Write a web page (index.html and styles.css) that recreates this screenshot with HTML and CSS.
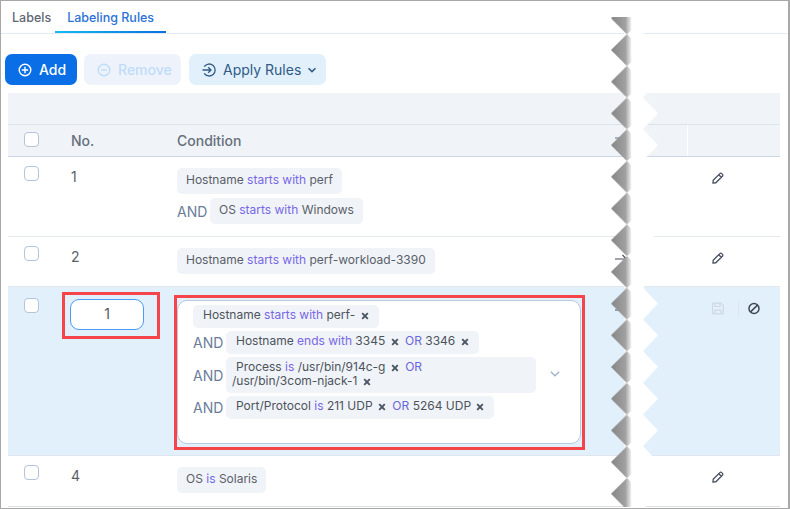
FILE: index.html
```html
<!DOCTYPE html>
<html lang="en">
<head>
<meta charset="utf-8">
<title>Labeling Rules</title>
<link rel="stylesheet" href="styles.css">
</head>
<body>
<svg class="defs" width="0" height="0" aria-hidden="true">
  <defs>
    <symbol id="x" viewBox="0 0 8 8"><path d="M1.2 1.2 6.8 6.8M6.8 1.2 1.2 6.8" fill="none" stroke="currentColor" stroke-width="1.9"/></symbol>
    <symbol id="arrow" viewBox="0 0 14 10"><path d="M1 5H12.5M8.5 1 12.5 5 8.5 9" fill="none" stroke="currentColor" stroke-width="1.2"/></symbol>
    <symbol id="pencil" viewBox="0 0 12 12"><path d="M1.2 8.2 7.8 1.6a1.3 1.3 0 0 1 1.9 0l.7.7a1.3 1.3 0 0 1 0 1.9L3.8 10.8 1 11ZM6.8 2.7 9.3 5.2" fill="none" stroke="currentColor" stroke-width="1.3"/></symbol>
    <linearGradient id="shade" x1="0" x2="1" y1="0" y2="0">
      <stop offset="0" stop-color="#868686"/>
      <stop offset=".7" stop-color="#a0a0a0"/>
      <stop offset="1" stop-color="#f4f4f4"/>
    </linearGradient>
    <pattern id="tear" x="0" y="17.15" width="50" height="31.7" patternUnits="userSpaceOnUse">
      <polygon points="33,0 48,15.85 33,31.7 14,31.7 20,15.85 16,0" fill="#fff"/>
      <polygon points="1,15.85 17,0 21,4 21.5,28 17,31.7 15,30" fill="url(#shade)"/>
    </pattern>
  </defs>
</svg>
<main class="frame">
  <nav class="tabs">
    <a class="tab">Labels</a>
    <a class="tab tab-active">Labeling Rules</a>
  </nav>

  <div class="toolbar">
    <button class="btn btn-add">
      <svg class="btn-icon" viewBox="0 0 14 14"><circle cx="7" cy="7" r="5.8" fill="none" stroke="currentColor" stroke-width="1.4"/><path d="M7 3.8v6.4M3.8 7h6.4" stroke="currentColor" stroke-width="1.4"/></svg>
      Add
    </button>
    <button class="btn btn-remove">
      <svg class="btn-icon" viewBox="0 0 14 14"><circle cx="7" cy="7" r="5.8" fill="none" stroke="currentColor" stroke-width="1.4"/><path d="M4 7h6" stroke="currentColor" stroke-width="1.4"/></svg>
      Remove
    </button>
    <button class="btn btn-apply">
      <svg class="btn-icon" viewBox="0 0 14 14"><path d="M2.2 3.6A6 6 0 1 1 2.2 10.4" fill="none" stroke="currentColor" stroke-width="1.3"/><path d="M.5 7H9M6.2 4.2 9 7 6.2 9.8" fill="none" stroke="currentColor" stroke-width="1.3"/></svg>
      Apply Rules
      <svg class="btn-caret" viewBox="0 0 10 6"><path d="M1.5 1.2 5 4.6 8.5 1.2" fill="none" stroke="currentColor" stroke-width="1.5"/></svg>
    </button>
  </div>

  <section class="table">
    <div class="band"></div>
    <div class="row head">
      <div class="cell"><span class="check"></span></div>
      <div class="cell head-text">No.</div>
      <div class="cell head-text">Condition</div>
      <div class="cell"><svg class="arrow"><use href="#arrow"/></svg></div>
      <div class="cell head-last"></div>
    </div>

    <div class="row">
      <div class="cell"><span class="check"></span></div>
      <div class="cell num">1</div>
      <div class="cell conds">
        <div class="chip">Hostname <em>starts with</em> perf</div>
        <div class="line"><span class="and">AND</span><div class="chip">OS <em>starts with</em> Windows</div></div>
      </div>
      <div class="cell"><svg class="arrow"><use href="#arrow"/></svg></div>
      <div class="cell actions"><svg class="pencil"><use href="#pencil"/></svg></div>
    </div>

    <div class="row">
      <div class="cell"><span class="check"></span></div>
      <div class="cell num">2</div>
      <div class="cell conds"><div class="chip">Hostname <em>starts with</em> perf-workload-3390</div></div>
      <div class="cell"><svg class="arrow"><use href="#arrow"/></svg></div>
      <div class="cell actions"><svg class="pencil"><use href="#pencil"/></svg></div>
    </div>

    <div class="row row-edit">
      <div class="cell"><span class="check"></span></div>
      <div class="cell">
        <div class="mark mark-num"><div class="num-input">1</div></div>
      </div>
      <div class="cell">
        <div class="mark mark-cond">
          <div class="editor">
            <div class="editor-rows">
              <div class="line first"><div class="chip tag">Hostname <em>starts with</em> perf- <svg class="x"><use href="#x"/></svg></div></div>
              <div class="line"><span class="and">AND</span><div class="chip tag">Hostname <em>ends with</em> 3345 <svg class="x"><use href="#x"/></svg> <i>OR</i> 3346 <svg class="x"><use href="#x"/></svg></div></div>
              <div class="line"><span class="and">AND</span><div class="chip tag tag-wrap"><span class="indent">Process <em>is</em> /usr/bin/914c-g <svg class="x"><use href="#x"/></svg> <i>OR</i></span><span>/usr/bin/3com-njack-1 <svg class="x"><use href="#x"/></svg></span></div></div>
              <div class="line"><span class="and">AND</span><div class="chip tag">Port/Protocol <em>is</em> 211 UDP <svg class="x"><use href="#x"/></svg> <i>OR</i> 5264 UDP <svg class="x"><use href="#x"/></svg></div></div>
            </div>
            <svg class="editor-caret" viewBox="0 0 10 6"><path d="M.8.8 5 4.8 9.2.8" fill="none" stroke="currentColor" stroke-width="1.3"/></svg>
          </div>
        </div>
      </div>
      <div class="cell"><svg class="arrow"><use href="#arrow"/></svg></div>
      <div class="cell actions actions-edit">
        <svg class="save" viewBox="0 0 12 12"><path d="M.6 1.6a1 1 0 0 1 1-1h7.2l2.6 2.6v7.2a1 1 0 0 1-1 1H1.6a1 1 0 0 1-1-1Z" fill="none" stroke="currentColor" stroke-width="1.2"/><path d="M3 .8V4h5V.8M3 11.2V7.6h6v3.6" fill="none" stroke="currentColor" stroke-width="1.2"/></svg>
        <span class="sep"></span>
        <svg class="ban" viewBox="0 0 12 12"><circle cx="6" cy="6" r="5" fill="none" stroke="currentColor" stroke-width="1.5"/><path d="M2.6 9.4 9.4 2.6" stroke="currentColor" stroke-width="1.5"/></svg>
      </div>
    </div>

    <div class="row row-last">
      <div class="cell"><span class="check"></span></div>
      <div class="cell num">4</div>
      <div class="cell conds"><div class="chip">OS <em>is</em> Solaris</div></div>
      <div class="cell"></div>
      <div class="cell actions"><svg class="pencil"><use href="#pencil"/></svg></div>
    </div>
  </section>

  <svg class="tear" width="50" height="490" aria-hidden="true"><rect width="50" height="490" fill="url(#tear)"/></svg>
</main>
</body>
</html>
```

FILE: styles.css
```css
* { box-sizing: border-box; }

html, body {
  margin: 0;
  height: 509px;
  overflow: hidden;
  background: #fff;
  font-family: Inter, "Liberation Sans", sans-serif;
}

.defs { position: absolute; }

.frame {
  position: relative;
  width: 790px;
  height: 509px;
  border: 1px solid #a8a8a8;
  border-right-width: 2px;
  overflow: hidden;
}

/* Tabs */
.tabs {
  display: flex;
  height: 32px;
  border-bottom: 1px solid #e4eaf3;
  box-sizing: content-box;
  padding-left: 11px;
}

.tab {
  display: block;
  height: 32px;
  font-size: 12.5px;
  font-weight: 500;
  line-height: 33px;
  color: #5f6873;
}

.tab-active {
  margin-left: 4px;
  padding: 0 12px 0 12px;
  color: #2a72d8;
  border-bottom: 2px solid;
  border-image: linear-gradient(90deg, #12bdf2, #0a6fe0) 1;
}

/* Toolbar */
.toolbar {
  display: flex;
  margin-top: 20px;
  padding-left: 4px;
}

.btn {
  display: flex;
  align-items: center;
  height: 31px;
  padding: 0;
  border: 0;
  border-radius: 7px;
  font-family: inherit;
  font-size: 14px;
  font-weight: 500;
}

.btn-icon { width: 14px; height: 14px; margin-right: 7px; flex: none; }

.btn-add {
  width: 72px;
  padding-left: 13px;
  background: #0a6fe6;
  color: #fff;
}

.btn-remove {
  width: 97px;
  margin-left: 7px;
  padding-left: 13px;
  background: #eef3fb;
  color: #bfdcf8;
}

.btn-apply {
  width: 137px;
  margin-left: 8px;
  padding-left: 13px;
  background: #e2f0fc;
  color: #2f5b85;
  font-weight: 400;
}

.btn-caret { width: 10px; height: 6px; margin-left: 6px; }

/* Table */
.table {
  width: 772px;
  margin: 8px 0 0 7px;
}

.band {
  height: 32px;
  background: #f0f3f7;
  border-bottom: 1px solid #dde3eb;
}

.row {
  display: grid;
  grid-template-columns: 63px 106px 437px 73px 93px;
  border-bottom: 1px solid #e3e7ee;
}

.head {
  height: 32px;
  background: #f0f3f7;
  border-bottom-color: #ccd5e1;
}

.head .cell { padding-top: 0; }
.head .check { margin-top: 7px; }
.head .arrow { margin-top: 8px; color: #5c7391; }

.head-text {
  font-size: 14px;
  line-height: 31px;
  font-weight: 500;
  color: #66707d;
}

.head-last { border-left: 1px solid #fff; }

.check {
  display: block;
  width: 15px;
  height: 15px;
  margin: 9px 0 0 16px;
  background: #fff;
  border: 1px solid #b4c4d9;
  border-radius: 4px;
}

.num {
  padding-top: 10px;
  font-size: 14px;
  line-height: 20px;
  color: #5b5f66;
}

.conds {
  padding: 11px 0 12px;
  display: flex;
  flex-direction: column;
  align-items: flex-start;
  gap: 4px;
}

.chip {
  height: 26px;
  padding: 0 9px;
  border-radius: 5px;
  background: #f0f3f7;
  font-size: 12px;
  line-height: 24px;
  color: #5a6069;
  white-space: nowrap;
}

.chip em { font-style: normal; color: #7867e6; }
.chip i { font-style: normal; color: #6a66dd; margin-left: 3px; }

.line {
  display: flex;
  align-items: center;
}

.and {
  width: 33px;
  flex: none;
  font-size: 14px;
  color: #6a7d99;
}

.arrow {
  display: block;
  width: 14px;
  height: 10px;
  margin-top: 17px;
  color: #454f5e;
}

.actions { padding: 15px 0 0 25px; }

.pencil {
  display: block;
  width: 12px;
  height: 12px;
  color: #454f5e;
}

/* Row in edit mode */
.row-edit {
  height: 169px;
  background: #e2f0fc;
  border-bottom-color: #dfe6ee;
}

.row-edit .check { margin-top: 11px; }
.row-edit .arrow { margin-top: 18px; }

.mark { border: 3px solid #f5454a; }

.mark-num {
  width: 98px;
  height: 47px;
  margin: 5px 0 0 -9px;
  padding: 4px 0 0 5px;
}

.num-input {
  width: 74px;
  height: 31px;
  background: #fff;
  border: 1px solid #4b9cf2;
  border-radius: 9px;
  text-align: center;
  font-size: 14px;
  line-height: 28px;
  color: #555a60;
}

.mark-cond {
  width: 411px;
  height: 155px;
  margin: 8px 0 0 -3px;
  padding: 2px 1px 0 0;
}

.editor {
  display: flex;
  height: 144px;
  padding: 4px 0 0 15px;
  background: #fff;
  border: 1px solid #b9c8db;
  border-radius: 10px;
}

.editor-rows {
  display: flex;
  flex-direction: column;
  align-items: flex-start;
  gap: 3px;
  width: 343px;
}

.editor-rows .line { width: 100%; }

.tag {
  height: 23px;
  padding: 0 10px;
  line-height: 20px;
  color: #4d535c;
}

.tag-wrap {
  display: flex;
  flex-direction: column;
  flex: 1;
  height: 36px;
  padding: 3px 6px;
  line-height: 14px;
  border-radius: 5px;
}

.indent { padding-left: 4px; }

.x {
  display: inline-block;
  width: 8px;
  height: 8px;
  margin-left: 2px;
  vertical-align: -1px;
  color: #4a5563;
}

.editor-caret {
  width: 10px;
  height: 6px;
  margin: 66px 0 0 14px;
  color: #9db3cc;
}

.actions-edit {
  display: flex;
  align-items: flex-start;
  padding: 15px 0 0 25px;
}

.save { width: 12px; height: 13px; color: #cdd9e4; flex: none; }
.sep { width: 1px; height: 16px; margin: -1px 0 0 14px; background: #dbe6f0; }
.ban { width: 12px; height: 13px; margin-left: 9px; color: #3f4855; flex: none; }

.row-last { border-bottom-color: #dcdfe4; height: 51px; }
.row-last .check { margin-top: 9px; }

/* Torn paper edge lying over the page */
.tear {
  position: absolute;
  left: 609px;
  top: 16px;
}
```
